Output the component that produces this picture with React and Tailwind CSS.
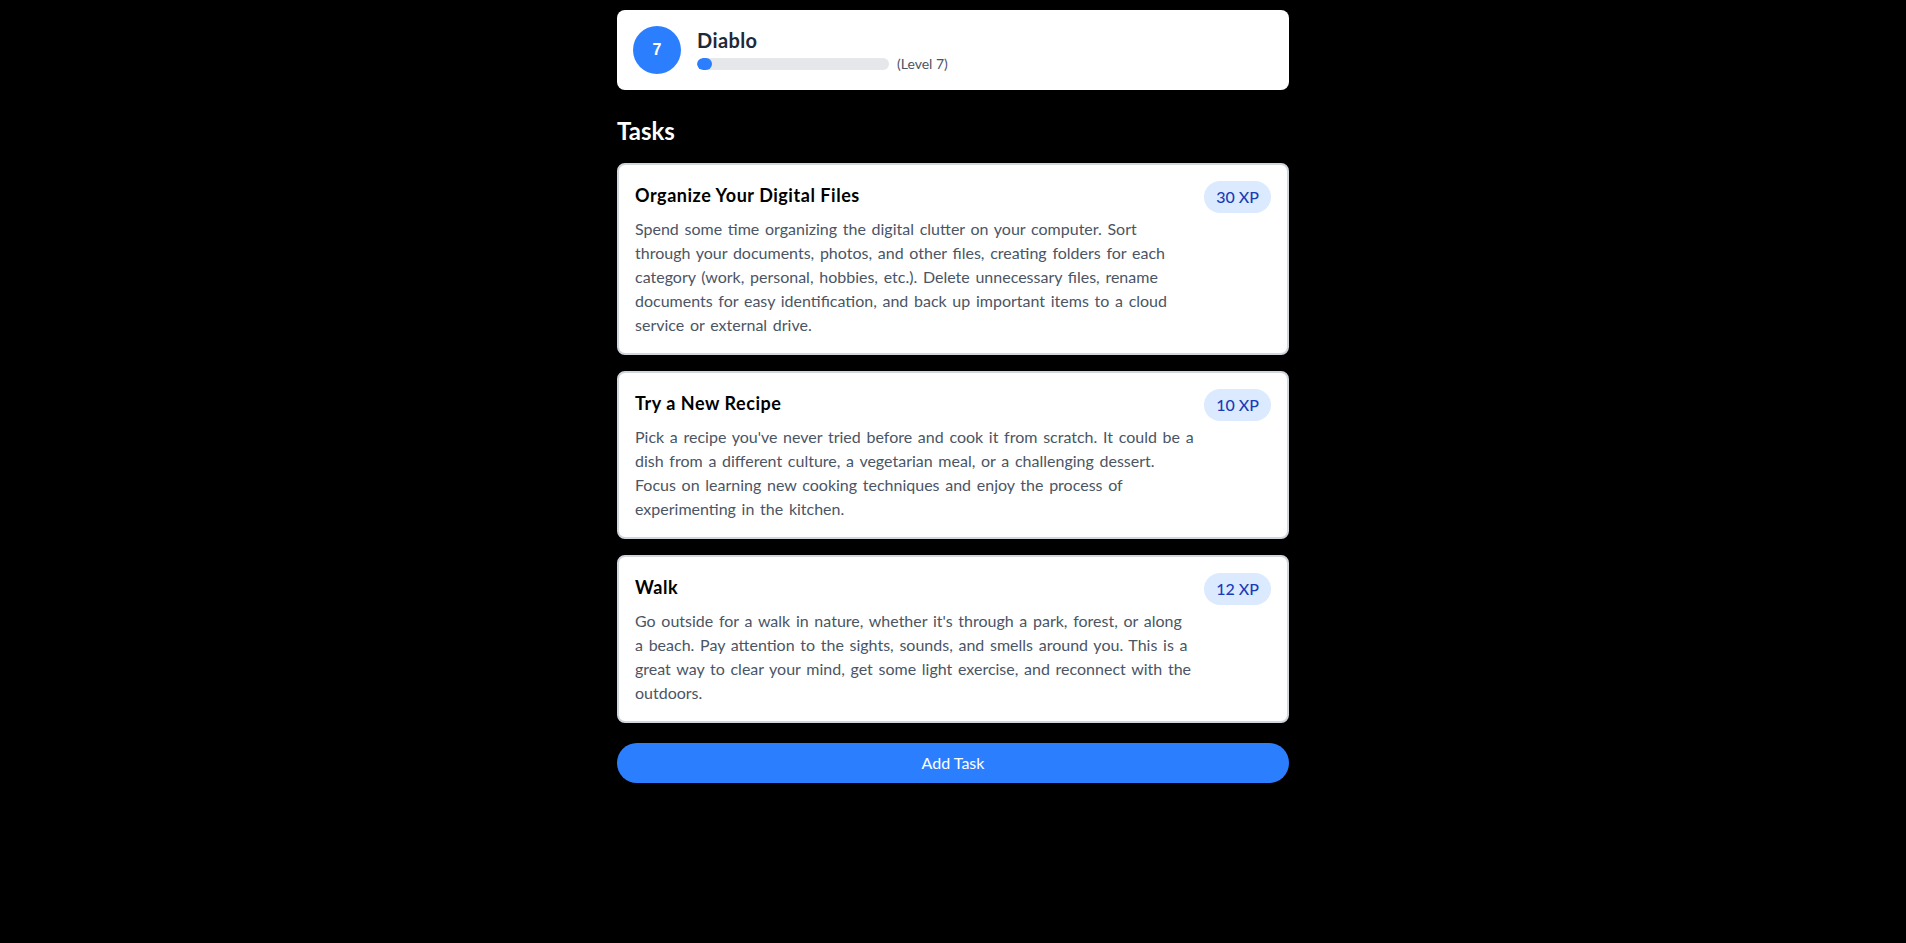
import React from 'react';

const tasks = [
  {
    id: 1,
    title: 'Organize Your Digital Files',
    description:
      'Spend some time organizing the digital clutter on your computer. Sort through your documents, photos, and other files, creating folders for each category (work, personal, hobbies, etc.). Delete unnecessary files, rename documents for easy identification, and back up important items to a cloud service or external drive.',
    xp: 30,
  },
  {
    id: 2,
    title: 'Try a New Recipe',
    description:
      "Pick a recipe you've never tried before and cook it from scratch. It could be a dish from a different culture, a vegetarian meal, or a challenging dessert. Focus on learning new cooking techniques and enjoy the process of experimenting in the kitchen.",
    xp: 10,
  },
  {
    id: 3,
    title: 'Walk',
    description:
      "Go outside for a walk in nature, whether it's through a park, forest, or along a beach. Pay attention to the sights, sounds, and smells around you. This is a great way to clear your mind, get some light exercise, and reconnect with the outdoors.",
    xp: 12,
  },
];

const TaskCard = ({ task }) => (
  <div className="bg-white border-2 border-gray-300 rounded-lg shadow p-4 flex justify-between gap-2">
    <div className="flex-1">
      <h3 className="text-lg font-bold text-black leading-7 tracking-[0.03em]">{task.title}</h3>
      <p className="mt-2 max-w-[559.3px] text-base leading-6 text-gray-600 tracking-normal [word-spacing:1.6px]">
        {task.description}
      </p>
    </div>
    <span className="self-start shrink-0 bg-blue-100 text-blue-800 text-base font-medium px-3 py-1 rounded-full leading-6">
      {task.xp} XP
    </span>
  </div>
);

const App = () => {
  const level = 7;
  const progress = 8;

  return (
    <div className="min-h-screen bg-black pt-[10px] font-['Lato',sans-serif]">
      <div className="max-w-2xl mx-auto">
        {/* Player header */}
        <div className="bg-white rounded-lg p-4 flex items-center gap-4">
          <div className="w-12 h-12 rounded-full bg-blue-500 text-white flex items-center justify-center font-bold text-base font-['Liberation_Sans',sans-serif]">
            {level}
          </div>
          <div>
            <h2 className="text-xl font-bold text-gray-800 leading-7 tracking-[0.02em]">Diablo</h2>
            <div className="flex items-center">
              <div className="w-48 h-3 bg-gray-200 rounded-full overflow-hidden">
                <div className="h-full bg-blue-500 rounded-full" style={{ width: `${progress}%` }} />
              </div>
              <span className="ml-2 text-sm text-gray-600">(Level {level})</span>
            </div>
          </div>
        </div>

        <h1 className="mt-[25px] mb-4 text-2xl font-bold text-white leading-8">Tasks</h1>

        <div className="space-y-4">
          {tasks.map((task) => (
            <TaskCard key={task.id} task={task} />
          ))}
        </div>

        <button className="mt-5 w-full bg-blue-500 text-white text-base py-2 rounded-full leading-6">
          Add Task
        </button>
      </div>
    </div>
  );
};

export default App;
